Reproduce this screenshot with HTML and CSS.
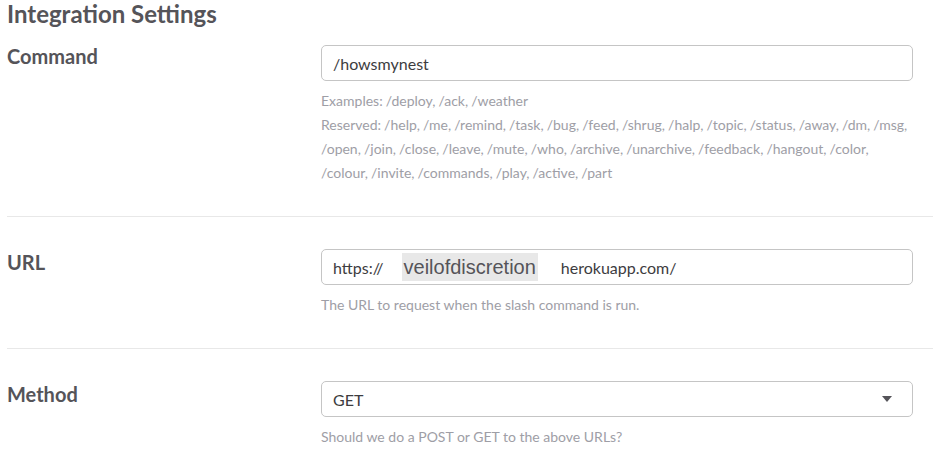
FILE: index.html
```html
<!DOCTYPE html>
<html>
<head lang="en">
    <meta charset="UTF-8">
    <title>Integration Settings</title>
    <link rel="stylesheet" href="styles.css">
</head>
<body>
    <div class="settings">
        <h2 class="title">Integration Settings</h2>

        <div class="row row-first">
            <label class="label">Command</label>
            <div class="field">
                <div class="input">/howsmynest</div>
                <p class="help help-list">
                    Examples: /deploy, /ack, /weather<br>
                    Reserved: /help, /me, /remind, /task, /bug, /feed, /shrug, /halp, /topic, /status, /away, /dm, /msg, /open, /join, /close, /leave, /mute, /who, /archive, /unarchive, /feedback, /hangout, /color, /colour, /invite, /commands, /play, /active, /part
                </p>
            </div>
        </div>

        <div class="row">
            <label class="label">URL</label>
            <div class="field">
                <div class="input">
                    <span>https://</span>
                    <span class="redact">veilofdiscretion</span>
                    <span>herokuapp.com/</span>
                </div>
                <p class="help">The URL to request when the slash command is run.</p>
            </div>
        </div>

        <div class="row row-last">
            <label class="label">Method</label>
            <div class="field">
                <div class="input select">
                    <span>GET</span>
                    <span class="caret"></span>
                </div>
                <p class="help">Should we do a POST or GET to the above URLs?</p>
            </div>
        </div>
    </div>
</body>
</html>
```

FILE: styles.css
```css
* {
    padding: 0;
    margin: 0;
    box-sizing: border-box;
}
body {
    background-color: #fff;
    font-family: Lato, "Open Sans", sans-serif;
    color: #555459;
}
.settings {
    width: 933px;
    padding-left: 7px;
}
.title {
    font-size: 24px;
    line-height: 28px;
    font-weight: 700;
}
.row {
    display: grid;
    grid-template-columns: 314px 592px;
    padding: 32px 0 31px;
    border-bottom: 1px solid #e8e8e8;
}
.row-first {
    padding-top: 17px;
}
.row-last {
    border-bottom: none;
}
.label {
    font-size: 20px;
    font-weight: 700;
    line-height: 26px;
}
.row-first .label {
    margin-top: -2px;
}
.input {
    display: flex;
    align-items: center;
    height: 36px;
    padding: 0 11px;
    border: 1px solid #c5c5c5;
    border-radius: 5px;
    font-size: 16px;
    color: #3d3c40;
}
.redact {
    margin: 0 23px 0 18px;
    padding: 3px 2px;
    background-color: #e8e8e8;
    font-family: "Liberation Sans", Arial, sans-serif;
    font-size: 20px;
    line-height: 22px;
    color: #555459;
}
.select {
    justify-content: space-between;
}
.caret {
    width: 0;
    height: 0;
    margin-right: 9px;
    border-left: 5px solid transparent;
    border-right: 5px solid transparent;
    border-top: 6px solid #555459;
}
.help {
    margin-top: 8px;
    font-size: 14px;
    line-height: 24px;
    color: #9e9ea6;
}
.help-list {
    word-spacing: -0.5px;
}
```
